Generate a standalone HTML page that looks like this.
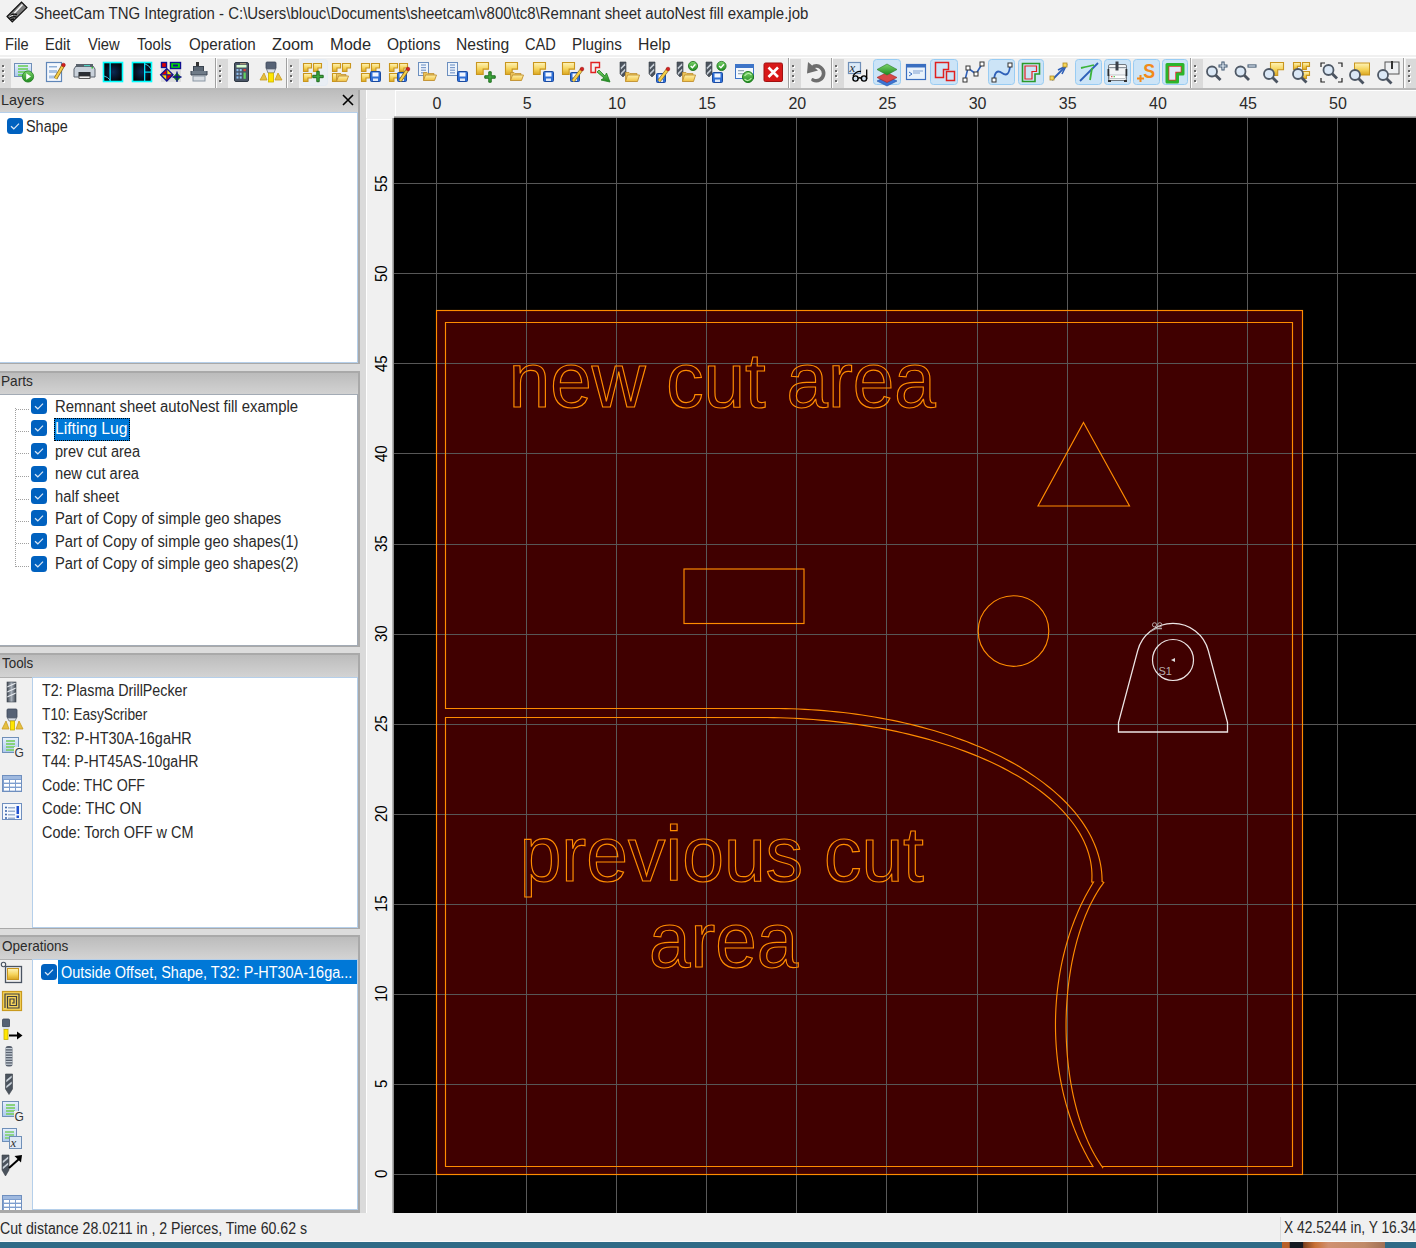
<!DOCTYPE html><html><head><meta charset="utf-8"><style>
html,body{margin:0;padding:0;width:1416px;height:1248px;overflow:hidden;background:#f0f0f0;}
*{box-sizing:border-box;}
.a{position:absolute;}
.t{position:absolute;white-space:pre;font-family:"Liberation Sans",sans-serif;line-height:1;transform-origin:0 0;}
svg{position:absolute;overflow:visible}
</style></head><body>
<div class="a" style="left:0;top:0;width:1416px;height:32px;background:#f2f2f2"></div>
<div class="a" style="left:0;top:32px;width:1416px;height:23px;background:#fff"></div>
<div class="a" style="left:0;top:55px;width:1416px;height:2px;background:#f0f0f0"></div>
<div class="a" style="left:0;top:57px;width:1416px;height:1px;background:#fff"></div>
<div class="a" style="left:0;top:58px;width:1416px;height:30px;background:#f0f0f0"></div>
<svg style="left:0;top:0" width="1416" height="90" viewBox="0 0 1416 90"><defs>
<linearGradient id="gy" x1="0" y1="0" x2="0" y2="1"><stop offset="0" stop-color="#fff4b8"/><stop offset="0.55" stop-color="#f5d35a"/><stop offset="1" stop-color="#d9a520"/></linearGradient>
<linearGradient id="gf" x1="0" y1="0" x2="0" y2="1"><stop offset="0" stop-color="#fff1a8"/><stop offset="1" stop-color="#f0c040"/></linearGradient>
<linearGradient id="gg" x1="0" y1="0" x2="0" y2="1"><stop offset="0" stop-color="#7ad36a"/><stop offset="1" stop-color="#1f8a1f"/></linearGradient>
<linearGradient id="gd" x1="0" y1="0" x2="1" y2="0"><stop offset="0" stop-color="#3f4650"/><stop offset="0.5" stop-color="#a8b0ba"/><stop offset="1" stop-color="#3f4650"/></linearGradient>
<linearGradient id="gm" x1="0" y1="0" x2="0" y2="1"><stop offset="0" stop-color="#e8f0ff"/><stop offset="1" stop-color="#aac8ec"/></linearGradient>
<radialGradient id="gb" cx="0.5" cy="0.5" r="0.6"><stop offset="0" stop-color="#0b2a55"/><stop offset="1" stop-color="#000"/></radialGradient>
</defs><rect x="0" y="59" width="11" height="29" fill="#dadada"/><rect x="3" y="66" width="2" height="2" fill="#fff"/><rect x="2" y="65" width="2" height="2" fill="#6a6a6a"/><rect x="3" y="71" width="2" height="2" fill="#fff"/><rect x="2" y="70" width="2" height="2" fill="#6a6a6a"/><rect x="3" y="76" width="2" height="2" fill="#fff"/><rect x="2" y="75" width="2" height="2" fill="#6a6a6a"/><rect x="3" y="81" width="2" height="2" fill="#fff"/><rect x="2" y="80" width="2" height="2" fill="#6a6a6a"/><rect x="14.5" y="63.5" width="17" height="13" fill="url(#gm)" stroke="#6f8fb8" stroke-width="1"/><path d="M18 66 H28" fill="none" stroke="#6ccf5a" stroke-width="1.6"/><path d="M18 69 H28" fill="none" stroke="#6ccf5a" stroke-width="1.6"/><path d="M18 72 H28" fill="none" stroke="#6ccf5a" stroke-width="1.6"/><path d="M18 75 H28" fill="none" stroke="#6ccf5a" stroke-width="1.6"/><circle cx="28" cy="76.5" r="5.6" fill="url(#gg)" stroke="#1f7f1f" stroke-width="0.8"/><path d="M26.2 73.3 L31 76.5 L26.2 79.7 Z" fill="#fff"/><rect x="46.5" y="62.5" width="15" height="19" fill="#f4f8fd" stroke="#5f86b8" stroke-width="1.2"/><rect x="49" y="66" width="8" height="1.5" fill="#8fb0d8"/><rect x="49" y="70" width="8" height="3" fill="#a9c3e3"/><rect x="49" y="75.5" width="9" height="3" fill="#a9c3e3"/><path d="M55.5 78.5 L63.5 65" fill="none" stroke="#8a6a20" stroke-width="3.6"/><path d="M55.5 78.5 L63.5 65" fill="none" stroke="#f5cf4a" stroke-width="2.2"/><circle cx="63.5" cy="65" r="1.8" fill="#d42020" stroke="#a01010" stroke-width="0.6"/><path d="M76 66 H93 L95 69 V77 H74 V69 Z" fill="#c9d1da" stroke="#5a636d" stroke-width="1"/><rect x="76" y="64" width="17" height="3" fill="#59626c"/><rect x="84" y="65" width="6" height="1.2" fill="#4fd0c0"/><rect x="91.5" y="67" width="1.5" height="1.5" fill="#30d030"/><rect x="78.5" y="72" width="12" height="4" fill="#2a2e33"/><rect x="79" y="76" width="11" height="2.5" fill="#f0f0f0" stroke="#333" stroke-width="0.8"/><rect x="103.5" y="62.5" width="19" height="19" fill="url(#gb)" stroke="#00ffff" stroke-width="1.6"/><rect x="109.5" y="63" width="1.3" height="18" fill="#00e8ff"/><path d="M104 76 Q108 77 110 80" fill="none" stroke="#40c8e8" stroke-width="1"/><rect x="132.5" y="62.5" width="19" height="19" fill="url(#gb)" stroke="#00ffff" stroke-width="1.6"/><rect x="144" y="63" width="1.3" height="18" fill="#00e8ff"/><rect x="145" y="71.5" width="6" height="1.2" fill="#00e8ff"/><path d="M145 64 Q149 65 151 69" fill="none" stroke="#40c8e8" stroke-width="1"/><rect x="161" y="69" width="20" height="13" fill="#dcdcdc"/><rect x="161.5" y="62.5" width="5" height="5" fill="#e00000" stroke="#101090" stroke-width="1.4"/><rect x="170.5" y="62.5" width="10" height="6" fill="#00e000" stroke="#101090" stroke-width="1.4"/><rect x="173" y="64.5" width="5" height="2" fill="#101090"/><path d="M166.8 68.6 L166.8 74.8 L160.60000000000002 74.8 Z" fill="#e00000"/><path d="M166.8 68.6 L173.0 74.8 L166.8 74.8 Z" fill="#ffe000"/><path d="M160.60000000000002 74.8 L166.8 74.8 L166.8 81.0 Z" fill="#ffe000"/><path d="M166.8 74.8 L173.0 74.8 L166.8 81.0 Z" fill="#e00000"/><path d="M166.8 68.6 L173.0 74.8 L166.8 81.0 L160.60000000000002 74.8 Z" fill="none" stroke="#101090" stroke-width="1.3"/><path d="M166.8 68.6 V81.0 M160.60000000000002 74.8 H173.0" fill="none" stroke="#101090" stroke-width="1"/><path d="M177 72.5 L181 77 L177 81.5 L173 77 Z" fill="#108010"/><path d="M177 71.5 V82 M172.5 77 H181.5" fill="none" stroke="#101090" stroke-width="1.3"/><rect x="196" y="62" width="3" height="4" fill="#333"/><rect x="193.5" y="66.5" width="10" height="8" fill="#5a6673" stroke="#3a4450" stroke-width="1"/><path d="M191 71 V75 H207 V71" fill="#6f7b88" stroke="#3a4450" stroke-width="1"/><rect x="193" y="76" width="12" height="5" fill="#d8dde3" stroke="#8a96a3" stroke-width="1"/><rect x="215" y="58" width="1" height="30" fill="#a0a0a0"/><rect x="216" y="58" width="1" height="30" fill="#fdfdfd"/><rect x="217" y="59" width="11" height="29" fill="#dadada"/><rect x="220" y="66" width="2" height="2" fill="#fff"/><rect x="219" y="65" width="2" height="2" fill="#6a6a6a"/><rect x="220" y="71" width="2" height="2" fill="#fff"/><rect x="219" y="70" width="2" height="2" fill="#6a6a6a"/><rect x="220" y="76" width="2" height="2" fill="#fff"/><rect x="219" y="75" width="2" height="2" fill="#6a6a6a"/><rect x="220" y="81" width="2" height="2" fill="#fff"/><rect x="219" y="80" width="2" height="2" fill="#6a6a6a"/><rect x="234.5" y="62.5" width="14" height="19" fill="#4a5566" stroke="#2f3844" stroke-width="1" rx="1.5"/><rect x="236.5" y="65" width="10" height="2.5" fill="#d8ffd0"/><rect x="240" y="63.3" width="6" height="1" fill="#c8a880"/><rect x="236.5" y="69.0" width="2" height="2.2" fill="#8fc0f0"/><rect x="239.7" y="69.0" width="2" height="2.2" fill="#8fc0f0"/><rect x="236.5" y="72.7" width="2" height="2.2" fill="#8fc0f0"/><rect x="239.7" y="72.7" width="2" height="2.2" fill="#8fc0f0"/><rect x="236.5" y="76.4" width="2" height="2.2" fill="#8fc0f0"/><rect x="239.7" y="76.4" width="2" height="2.2" fill="#8fc0f0"/><rect x="243.5" y="69" width="2.3" height="2.2" fill="#e04030"/><rect x="243.5" y="72.6" width="2.3" height="6.2" fill="#60d060"/><rect x="266" y="62" width="10" height="7" fill="#566275" stroke="#3e4858" stroke-width="0.8" rx="1"/><path d="M266.5 69 H275.5 L274 73 H268 Z" fill="#d9dee6" stroke="#6a7482" stroke-width="0.8"/><rect x="268.5" y="73" width="5" height="9" fill="#ffe600" stroke="#c8b000" stroke-width="0.8"/><path d="M260 80 L264 73 L267 80 Z" fill="#e6c040" stroke="#c89a20" stroke-width="0.8"/><path d="M275 80 L278 73 L282 80 Z" fill="#e6c040" stroke="#c89a20" stroke-width="0.8"/><rect x="286" y="58" width="1" height="30" fill="#a0a0a0"/><rect x="287" y="58" width="1" height="30" fill="#fdfdfd"/><rect x="288" y="59" width="11" height="29" fill="#dadada"/><rect x="291" y="66" width="2" height="2" fill="#fff"/><rect x="290" y="65" width="2" height="2" fill="#6a6a6a"/><rect x="291" y="71" width="2" height="2" fill="#fff"/><rect x="290" y="70" width="2" height="2" fill="#6a6a6a"/><rect x="291" y="76" width="2" height="2" fill="#fff"/><rect x="290" y="75" width="2" height="2" fill="#6a6a6a"/><rect x="291" y="81" width="2" height="2" fill="#fff"/><rect x="290" y="80" width="2" height="2" fill="#6a6a6a"/><rect x="300.5" y="59.5" width="27" height="26" fill="#e9eef4" stroke="#e4ebf3" stroke-width="1" rx="3"/><path d="M303.5 63.5 H311.5 V67.95 H307.95 V71.5 H303.5 Z" fill="url(#gy)" stroke="#c9961e" stroke-width="1.1"/><path d="M313.5 63.5 H321.5 V67.95 H317.95 V71.5 H313.5 Z" fill="url(#gy)" stroke="#c9961e" stroke-width="1.1"/><path d="M303.5 73.5 H311.5 V77.95 H307.95 V81.5 H303.5 Z" fill="url(#gy)" stroke="#c9961e" stroke-width="1.1"/><path d="M316.8 71.3 H319.2 V75.3 H323.2 V77.7 H319.2 V81.7 H316.8 V77.7 H312.8 V75.3 H316.8 Z" fill="#3ea83e" stroke="#1d6b1d" stroke-width="1"/><path d="M332.5 63.5 H340.5 V67.95 H336.95 V71.5 H332.5 Z" fill="url(#gy)" stroke="#c9961e" stroke-width="1.1"/><path d="M342.5 63.5 H350.5 V67.95 H346.95 V71.5 H342.5 Z" fill="url(#gy)" stroke="#c9961e" stroke-width="1.1"/><path d="M332.5 73.5 H340.5 V77.95 H336.95 V81.5 H332.5 Z" fill="url(#gy)" stroke="#c9961e" stroke-width="1.1"/><path d="M336.5 81.5 V73.5 H340 L341 74.5 H346 V76" fill="#e9c25a" stroke="#c09030" stroke-width="0.8"/><path d="M336.5 81.5 L338.5 76 H348.5 L346.5 81.5 Z" fill="url(#gf)" stroke="#c09030" stroke-width="0.9"/><path d="M361.5 63.5 H369.5 V67.95 H365.95 V71.5 H361.5 Z" fill="url(#gy)" stroke="#c9961e" stroke-width="1.1"/><path d="M371.5 63.5 H379.5 V67.95 H375.95 V71.5 H371.5 Z" fill="url(#gy)" stroke="#c9961e" stroke-width="1.1"/><path d="M361.5 73.5 H369.5 V77.95 H365.95 V81.5 H361.5 Z" fill="url(#gy)" stroke="#c9961e" stroke-width="1.1"/><rect x="370.5" y="71.5" width="10" height="10" fill="#2f6fd6" stroke="#1a4aa0" stroke-width="1" rx="1"/><rect x="372.5" y="72.5" width="6" height="4" fill="#f2f6ff"/><rect x="373" y="78.5" width="5" height="2.5" fill="#dfe8f8"/><path d="M389.5 63.5 H397.5 V67.95 H393.95 V71.5 H389.5 Z" fill="url(#gy)" stroke="#c9961e" stroke-width="1.1"/><path d="M399.5 63.5 H407.5 V67.95 H403.95 V71.5 H399.5 Z" fill="url(#gy)" stroke="#c9961e" stroke-width="1.1"/><path d="M389.5 73.5 H397.5 V77.95 H393.95 V81.5 H389.5 Z" fill="url(#gy)" stroke="#c9961e" stroke-width="1.1"/><rect x="397.5" y="72.5" width="9" height="9" fill="#2f6fd6" stroke="#1a4aa0" stroke-width="1" rx="1"/><rect x="399.5" y="73.5" width="5" height="4" fill="#f2f6ff"/><rect x="400" y="78.5" width="4" height="2.5" fill="#dfe8f8"/><path d="M400 81 L408 69" fill="none" stroke="#8a6a20" stroke-width="3.6"/><path d="M400 81 L408 69" fill="none" stroke="#f5cf4a" stroke-width="2.2"/><circle cx="408" cy="69" r="1.8" fill="#d42020" stroke="#a01010" stroke-width="0.6"/><rect x="418.5" y="62.5" width="10" height="13" fill="#eef4fb" stroke="#6c8fbf" stroke-width="1"/><path d="M421 65.0 H426" fill="none" stroke="#7a9acb" stroke-width="1.2"/><path d="M421 67.6 H426" fill="none" stroke="#7a9acb" stroke-width="1.2"/><path d="M421 70.2 H426" fill="none" stroke="#7a9acb" stroke-width="1.2"/><path d="M421 72.8 H426" fill="none" stroke="#7a9acb" stroke-width="1.2"/><path d="M423.5 80.5 V72.5 H427 L428 73.5 H434 V75" fill="#e9c25a" stroke="#c09030" stroke-width="0.8"/><path d="M423.5 80.5 L425.5 75 H436.5 L434.5 80.5 Z" fill="url(#gf)" stroke="#c09030" stroke-width="0.9"/><rect x="447.5" y="62.5" width="10" height="13" fill="#eef4fb" stroke="#6c8fbf" stroke-width="1"/><path d="M450 65.0 H455" fill="none" stroke="#7a9acb" stroke-width="1.2"/><path d="M450 67.6 H455" fill="none" stroke="#7a9acb" stroke-width="1.2"/><path d="M450 70.2 H455" fill="none" stroke="#7a9acb" stroke-width="1.2"/><path d="M450 72.8 H455" fill="none" stroke="#7a9acb" stroke-width="1.2"/><rect x="457.5" y="71.5" width="10" height="10" fill="#2f6fd6" stroke="#1a4aa0" stroke-width="1" rx="1"/><rect x="459.5" y="72.5" width="6" height="4" fill="#f2f6ff"/><rect x="460" y="78.5" width="5" height="2.5" fill="#dfe8f8"/><path d="M476.5 62.5 H488.5 V69.15 H483.15 V74.5 H476.5 Z" fill="url(#gy)" stroke="#c9961e" stroke-width="1.1"/><path d="M488.8 71.8 H491.2 V75.8 H495.2 V78.2 H491.2 V82.2 H488.8 V78.2 H484.8 V75.8 H488.8 Z" fill="#3ea83e" stroke="#1d6b1d" stroke-width="1"/><path d="M505.5 62.5 H517.5 V69.15 H512.15 V74.5 H505.5 Z" fill="url(#gy)" stroke="#c9961e" stroke-width="1.1"/><path d="M510.5 80.5 V72.5 H514 L515 73.5 H521 V75" fill="#e9c25a" stroke="#c09030" stroke-width="0.8"/><path d="M510.5 80.5 L512.5 75 H523.5 L521.5 80.5 Z" fill="url(#gf)" stroke="#c09030" stroke-width="0.9"/><path d="M533.5 62.5 H545.5 V69.15 H540.15 V74.5 H533.5 Z" fill="url(#gy)" stroke="#c9961e" stroke-width="1.1"/><rect x="543.5" y="71.5" width="10" height="10" fill="#2f6fd6" stroke="#1a4aa0" stroke-width="1" rx="1"/><rect x="545.5" y="72.5" width="6" height="4" fill="#f2f6ff"/><rect x="546" y="78.5" width="5" height="2.5" fill="#dfe8f8"/><path d="M562.5 62.5 H574.5 V69.15 H569.15 V74.5 H562.5 Z" fill="url(#gy)" stroke="#c9961e" stroke-width="1.1"/><rect x="570.5" y="72.5" width="9" height="9" fill="#2f6fd6" stroke="#1a4aa0" stroke-width="1" rx="1"/><rect x="572.5" y="73.5" width="5" height="4" fill="#f2f6ff"/><rect x="573" y="78.5" width="4" height="2.5" fill="#dfe8f8"/><path d="M573 81 L582 69" fill="none" stroke="#8a6a20" stroke-width="3.6"/><path d="M573 81 L582 69" fill="none" stroke="#f5cf4a" stroke-width="2.2"/><circle cx="582" cy="69" r="1.8" fill="#d42020" stroke="#a01010" stroke-width="0.6"/><path d="M591 62.5 H599.5 V67.5 H595.5 V72.5 H591 Z" fill="none" stroke="#e02020" stroke-width="1.4"/><path d="M599 70 L605 76 L606.5 73 L610 82 L601 80 L604 78 L597 72 Z" fill="url(#gg)" stroke="#1f7f1f" stroke-width="0.8"/><path d="M620 62 H626 V74 L623.0 77 L620 74 Z" fill="#4b535d" stroke="#3a4048" stroke-width="0.6"/><path d="M620.8 67.5 L625.2 63.0 V65.2 L620.8 69.7 Z" fill="#c9d0d8"/><path d="M620.8 73.0 L625.2 68.5 V70.7 L620.8 75.2 Z" fill="#c9d0d8"/><path d="M625.5 81.5 V72.5 H629 L630 73.5 H637 V75" fill="#e9c25a" stroke="#c09030" stroke-width="0.8"/><path d="M625.5 81.5 L627.5 75 H639.5 L637.5 81.5 Z" fill="url(#gf)" stroke="#c09030" stroke-width="0.9"/><path d="M649 62 H655 V74 L652.0 77 L649 74 Z" fill="#4b535d" stroke="#3a4048" stroke-width="0.6"/><path d="M649.8 67.5 L654.2 63.0 V65.2 L649.8 69.7 Z" fill="#c9d0d8"/><path d="M649.8 73.0 L654.2 68.5 V70.7 L649.8 75.2 Z" fill="#c9d0d8"/><rect x="656.5" y="73.5" width="9" height="9" fill="#2f6fd6" stroke="#1a4aa0" stroke-width="1" rx="1"/><rect x="658.5" y="74.5" width="5" height="4" fill="#f2f6ff"/><rect x="659" y="79.5" width="4" height="2.5" fill="#dfe8f8"/><path d="M659 81 L668 69" fill="none" stroke="#8a6a20" stroke-width="3.6"/><path d="M659 81 L668 69" fill="none" stroke="#f5cf4a" stroke-width="2.2"/><circle cx="668" cy="69" r="1.8" fill="#d42020" stroke="#a01010" stroke-width="0.6"/><path d="M677 62 H683 V74 L680.0 77 L677 74 Z" fill="#4b535d" stroke="#3a4048" stroke-width="0.6"/><path d="M677.8 67.5 L682.2 63.0 V65.2 L677.8 69.7 Z" fill="#c9d0d8"/><path d="M677.8 73.0 L682.2 68.5 V70.7 L677.8 75.2 Z" fill="#c9d0d8"/><path d="M682.5 81.5 V72.5 H686 L687 73.5 H693 V75" fill="#e9c25a" stroke="#c09030" stroke-width="0.8"/><path d="M682.5 81.5 L684.5 75 H695.5 L693.5 81.5 Z" fill="url(#gf)" stroke="#c09030" stroke-width="0.9"/><circle cx="693" cy="66" r="4.6" fill="url(#gg)" stroke="#187018" stroke-width="0.8"/><path d="M690.7 66 L692.4 67.8 L695.4 64.2" fill="none" stroke="#fff" stroke-width="1.4"/><path d="M706 62 H712 V74 L709.0 77 L706 74 Z" fill="#4b535d" stroke="#3a4048" stroke-width="0.6"/><path d="M706.8 67.5 L711.2 63.0 V65.2 L706.8 69.7 Z" fill="#c9d0d8"/><path d="M706.8 73.0 L711.2 68.5 V70.7 L706.8 75.2 Z" fill="#c9d0d8"/><rect x="712.5" y="72.5" width="10" height="10" fill="#2f6fd6" stroke="#1a4aa0" stroke-width="1" rx="1"/><rect x="714.5" y="73.5" width="6" height="4" fill="#f2f6ff"/><rect x="715" y="79.5" width="5" height="2.5" fill="#dfe8f8"/><circle cx="721.5" cy="66" r="4.6" fill="url(#gg)" stroke="#187018" stroke-width="0.8"/><path d="M719.2 66 L720.9 67.8 L723.9 64.2" fill="none" stroke="#fff" stroke-width="1.4"/><rect x="735.5" y="64.5" width="18" height="14" fill="#f4f8fd" stroke="#3d74c8" stroke-width="1"/><rect x="736" y="65" width="17" height="3" fill="#3d74c8"/><rect x="738" y="70" width="6" height="1.3" fill="#9ab"/><rect x="738" y="73" width="6" height="1.3" fill="#9ab"/><circle cx="748" cy="77" r="5.5" fill="url(#gg)" stroke="#1a7a1a" stroke-width="1"/><path d="M744.5 76 Q748 71.5 751.5 75 M751.5 78 Q748 82.5 744.5 79" fill="none" stroke="#b8f0a8" stroke-width="1.2"/><rect x="764" y="63" width="18.5" height="18.5" fill="#d81818" stroke="#a01010" stroke-width="1" rx="1.5"/><path d="M768.5 67.5 L778 77 M778 67.5 L768.5 77" fill="none" stroke="#fff" stroke-width="2.6"/><rect x="788" y="58" width="1" height="30" fill="#a0a0a0"/><rect x="789" y="58" width="1" height="30" fill="#fdfdfd"/><rect x="790" y="59" width="11" height="29" fill="#dadada"/><rect x="793" y="66" width="2" height="2" fill="#fff"/><rect x="792" y="65" width="2" height="2" fill="#6a6a6a"/><rect x="793" y="71" width="2" height="2" fill="#fff"/><rect x="792" y="70" width="2" height="2" fill="#6a6a6a"/><rect x="793" y="76" width="2" height="2" fill="#fff"/><rect x="792" y="75" width="2" height="2" fill="#6a6a6a"/><rect x="793" y="81" width="2" height="2" fill="#fff"/><rect x="792" y="80" width="2" height="2" fill="#6a6a6a"/><path d="M814 66.3 A7.4 7.4 0 1 1 813 80" fill="none" stroke="#6e6e6e" stroke-width="3.6" stroke-linecap="round"/><path d="M808 62 L807 73.5 L818 70.5 Z" fill="#6e6e6e"/><rect x="831" y="58" width="1" height="30" fill="#a0a0a0"/><rect x="832" y="58" width="1" height="30" fill="#fdfdfd"/><rect x="833" y="59" width="11" height="29" fill="#dadada"/><rect x="836" y="66" width="2" height="2" fill="#fff"/><rect x="835" y="65" width="2" height="2" fill="#6a6a6a"/><rect x="836" y="71" width="2" height="2" fill="#fff"/><rect x="835" y="70" width="2" height="2" fill="#6a6a6a"/><rect x="836" y="76" width="2" height="2" fill="#fff"/><rect x="835" y="75" width="2" height="2" fill="#6a6a6a"/><rect x="836" y="81" width="2" height="2" fill="#fff"/><rect x="835" y="80" width="2" height="2" fill="#6a6a6a"/><rect x="848.5" y="62.5" width="12" height="11" fill="#dceaf8" stroke="#6f8fb8" stroke-width="1.2"/><text x="849.5" y="72" font-family="Liberation Serif" font-style="italic" font-size="13" fill="#2a3340">x</text><circle cx="855.5" cy="78.5" r="2.6" fill="#cfe0f0" stroke="#000" stroke-width="1.4"/><circle cx="864" cy="78.5" r="2.6" fill="#cfe0f0" stroke="#000" stroke-width="1.4"/><path d="M858 78.5 Q859.7 77 861.5 78.5 M866.7 79 V69.5 M853 76 Q856 71 861 71.5" fill="none" stroke="#000" stroke-width="1.3"/><rect x="873.5" y="59.5" width="27" height="25" fill="#cce4f7" stroke="#99ccf3" stroke-width="1" rx="3"/><path d="M887 76 L897 81 L887 86 L877 81 Z" fill="#3b74d6" stroke="#2050a0" stroke-width="0.6"/><path d="M887 72.5 L897 77.5 L887 82.5 L877 77.5 Z" fill="#d84848" stroke="#a02020" stroke-width="0.6"/><path d="M887 64 L897 69.5 L887 75 L877 69.5 Z" fill="url(#gg)" stroke="#2a7a2a" stroke-width="0.6"/><rect x="906.5" y="64.5" width="19" height="15" fill="#eaf2fb" stroke="#3a6ec0" stroke-width="1.2"/><rect x="907" y="65" width="18" height="2.5" fill="#3a6ec0"/><path d="M909 72 L912 74 L909 76" fill="none" stroke="#3a6ec0" stroke-width="1"/><path d="M913 71 H923 M913 73 H920" fill="none" stroke="#7f9fd0" stroke-width="1"/><rect x="930.5" y="59.5" width="27" height="25" fill="#cce4f7" stroke="#99ccf3" stroke-width="1" rx="3"/><path d="M935.5 62.5 H948.5 V69.5 H943.5 V77.5 H935.5 Z" fill="none" stroke="#e02020" stroke-width="1.5"/><rect x="946.5" y="71.5" width="8" height="9" fill="none" stroke="#e02020" stroke-width="1.5"/><path d="M965 80 L968 68 L976 74 L982 64" fill="none" stroke="#2f60b8" stroke-width="1.6"/><rect x="963" y="78" width="4" height="4" fill="#fff" stroke="#333" stroke-width="1"/><rect x="966" y="66" width="4" height="4" fill="#fff" stroke="#333" stroke-width="1"/><rect x="974" y="72" width="4" height="4" fill="#fff" stroke="#333" stroke-width="1"/><rect x="980" y="62" width="4" height="4" fill="#fff" stroke="#333" stroke-width="1"/><rect x="988.5" y="59.5" width="26" height="25" fill="#cce4f7" stroke="#99ccf3" stroke-width="1" rx="3"/><path d="M994 80 Q995 68 1002 73 Q1009 78 1010 66" fill="none" stroke="#2f60b8" stroke-width="1.8"/><rect x="992" y="78" width="4" height="4" fill="#fff" stroke="#333" stroke-width="1"/><rect x="1008" y="63" width="4" height="4" fill="#fff" stroke="#333" stroke-width="1"/><rect x="1018.5" y="59.5" width="25" height="25" fill="#cce4f7" stroke="#99ccf3" stroke-width="1" rx="3"/><path d="M1022.5 63.5 H1039.5 V74 H1035 V81.5 H1022.5 Z" fill="none" stroke="#2a9a2a" stroke-width="1.6"/><path d="M1025 66 H1036.5 V71.5 H1032 V79 H1025 Z" fill="none" stroke="#e02020" stroke-width="1.2"/><path d="M1052 80 L1064 68" fill="none" stroke="#2f60b8" stroke-width="1.8"/><path d="M1058 70 L1066 66 L1062 74" fill="none" stroke="#2f60b8" stroke-width="1.6"/><rect x="1050" y="76" width="4" height="4" fill="#f5d55a" stroke="#b08a20" stroke-width="0.8"/><rect x="1063" y="63" width="4" height="4" fill="#f5d55a" stroke="#b08a20" stroke-width="0.8"/><rect x="1075.5" y="59.5" width="26" height="25" fill="#cce4f7" stroke="#99ccf3" stroke-width="1" rx="3"/><path d="M1080 81 L1098 63" fill="none" stroke="#2f60b8" stroke-width="1.8"/><path d="M1081 68 Q1090 66 1094 65 M1090 80 L1092 68" fill="none" stroke="#3cb43c" stroke-width="1.8"/><rect x="1104.5" y="59.5" width="26" height="25" fill="#cce4f7" stroke="#99ccf3" stroke-width="1" rx="3"/><rect x="1108.5" y="64.5" width="18" height="16" fill="#f2f4f6" stroke="#707880" stroke-width="1" rx="1.5"/><rect x="1109" y="67" width="17" height="1.2" fill="#8a929a"/><rect x="1115.5" y="61.5" width="3" height="9" fill="#3a4048"/><rect x="1109.5" y="75" width="16" height="3.5" fill="#fff" stroke="#9aa0a6" stroke-width="0.6"/><rect x="1111" y="76.2" width="1.5" height="1" fill="#e03030"/><rect x="1113.5" y="76.2" width="1.5" height="1" fill="#30c030"/><rect x="1107.5" y="69" width="1.8" height="7" fill="#2a2e33"/><rect x="1125.5" y="69" width="1.8" height="7" fill="#2a2e33"/><rect x="1108" y="80" width="3" height="2" fill="#333"/><rect x="1124" y="80" width="3" height="2" fill="#333"/><rect x="1133.5" y="59.5" width="26" height="25" fill="#cce4f7" stroke="#99ccf3" stroke-width="1" rx="3"/><text x="1143.2" y="78.5" font-family="Liberation Sans" font-weight="bold" font-size="21" fill="#f28a1a" transform="translate(1143.2 78.5) scale(0.85 1) translate(-1143.2 -78.5)">S</text><path d="M1137 78.5 H1144 M1140.5 75 V82" fill="none" stroke="#f28a1a" stroke-width="2"/><rect x="1162.5" y="59.5" width="25" height="25" fill="#cce4f7" stroke="#99ccf3" stroke-width="1" rx="3"/><path d="M1167 64.5 H1183 V74 H1177.5 V82 H1167 Z" fill="#e03030" stroke="#2bb52b" stroke-width="3" stroke-linejoin="round"/><path d="M1169.3 66.8 H1180.7 V71.8 H1175.3 V79.7 H1169.3 Z" fill="#dfeaf6"/><rect x="1190" y="58" width="1" height="30" fill="#a0a0a0"/><rect x="1191" y="58" width="1" height="30" fill="#fdfdfd"/><rect x="1192" y="59" width="11" height="29" fill="#dadada"/><rect x="1195" y="66" width="2" height="2" fill="#fff"/><rect x="1194" y="65" width="2" height="2" fill="#6a6a6a"/><rect x="1195" y="71" width="2" height="2" fill="#fff"/><rect x="1194" y="70" width="2" height="2" fill="#6a6a6a"/><rect x="1195" y="76" width="2" height="2" fill="#fff"/><rect x="1194" y="75" width="2" height="2" fill="#6a6a6a"/><rect x="1195" y="81" width="2" height="2" fill="#fff"/><rect x="1194" y="80" width="2" height="2" fill="#6a6a6a"/><path d="M1215.5 75.0 L1220.5 80.0" fill="none" stroke="#4a5360" stroke-width="2.8"/><circle cx="1212" cy="71.5" r="5" fill="#dbe8f6" stroke="#4f5966" stroke-width="1.8"/><path d="M1218.5 66 H1227.5 M1223 61.5 V70.5" fill="none" stroke="#3f5670" stroke-width="3.2"/><path d="M1219.5 66 H1226.5 M1223 62.5 V69.5" fill="none" stroke="#e8f0f8" stroke-width="1.2"/><path d="M1244.0 75.0 L1249.0 80.0" fill="none" stroke="#4a5360" stroke-width="2.8"/><circle cx="1240.5" cy="71.5" r="5" fill="#dbe8f6" stroke="#4f5966" stroke-width="1.8"/><path d="M1247.5 66 H1256.5" fill="none" stroke="#3f5670" stroke-width="3.2"/><path d="M1248.5 66 H1255.5" fill="none" stroke="#e8f0f8" stroke-width="1.2"/><path d="M1270.5 62.5 H1283.5 V69.7 H1277.7 V75.5 H1270.5 Z" fill="url(#gy)" stroke="#c9961e" stroke-width="1.1"/><path d="M1272.5 77.5 L1277.5 82.5" fill="none" stroke="#4a5360" stroke-width="2.8"/><circle cx="1269" cy="74" r="5" fill="#dbe8f6" stroke="#4f5966" stroke-width="1.8"/><path d="M1293.5 62.5 H1300.5 V66.4 H1297.4 V69.5 H1293.5 Z" fill="url(#gy)" stroke="#c9961e" stroke-width="1.1"/><path d="M1302.5 62.5 H1309.5 V66.4 H1306.4 V69.5 H1302.5 Z" fill="url(#gy)" stroke="#c9961e" stroke-width="1.1"/><path d="M1302.5 71.5 H1309.5 V75.4 H1306.4 V78.5 H1302.5 Z" fill="url(#gy)" stroke="#c9961e" stroke-width="1.1"/><path d="M1301.5 77.5 L1306.5 82.5" fill="none" stroke="#4a5360" stroke-width="2.8"/><circle cx="1298" cy="74" r="5" fill="#dbe8f6" stroke="#4f5966" stroke-width="1.8"/><path d="M1321 67 V63 H1325 M1338 63 H1342 V67 M1321 78 V82 H1325 M1342 78 V82 H1338" fill="none" stroke="#222" stroke-width="1.2"/><path d="M1332.0 73.5 L1337.0 78.5" fill="none" stroke="#4a5360" stroke-width="2.8"/><circle cx="1328.5" cy="70" r="5" fill="#dbe8f6" stroke="#4f5966" stroke-width="1.8"/><rect x="1354.5" y="63" width="15" height="12" fill="url(#gy)" stroke="#c9961e" stroke-width="1"/><path d="M1358.5 78.5 L1363.5 83.5" fill="none" stroke="#4a5360" stroke-width="2.8"/><circle cx="1355" cy="75" r="5" fill="#dbe8f6" stroke="#4f5966" stroke-width="1.8"/><rect x="1385" y="62" width="14" height="12" fill="#eef0f2" stroke="#555" stroke-width="1"/><rect x="1391" y="61" width="2" height="8" fill="#333"/><path d="M1386.5 78.5 L1391.5 83.5" fill="none" stroke="#4a5360" stroke-width="2.8"/><circle cx="1383" cy="75" r="5" fill="#dbe8f6" stroke="#4f5966" stroke-width="1.8"/><rect x="1403" y="58" width="1" height="30" fill="#a0a0a0"/><rect x="1404" y="58" width="1" height="30" fill="#fdfdfd"/><rect x="1406" y="59" width="11" height="29" fill="#dadada"/><rect x="1409" y="66" width="2" height="2" fill="#fff"/><rect x="1408" y="65" width="2" height="2" fill="#6a6a6a"/><rect x="1409" y="71" width="2" height="2" fill="#fff"/><rect x="1408" y="70" width="2" height="2" fill="#6a6a6a"/><rect x="1409" y="76" width="2" height="2" fill="#fff"/><rect x="1408" y="75" width="2" height="2" fill="#6a6a6a"/><rect x="1409" y="81" width="2" height="2" fill="#fff"/><rect x="1408" y="80" width="2" height="2" fill="#6a6a6a"/></svg>
<svg style="left:0;top:0" width="32" height="32" viewBox="0 0 32 32"><path d="M7 16.5 L21.5 2 L27 7.5 L12.3 22 Z" fill="#7c7c7c" stroke="#111" stroke-width="1.1"/><path d="M14 13.5 L22.5 4.5" stroke="#f4f4f4" stroke-width="1.6"/><path d="M10.5 15.5 Q13 13.5 17 14.5 M9 18.5 Q12 16 16.5 17 M11 19.5 L14 19" stroke="#111" stroke-width="1.3" fill="none"/><path d="M9.5 17 Q11 15.5 13 15.5" stroke="#eee" stroke-width="1" fill="none"/></svg>
<div class="t" style="left:33.92px;top:5.66px;font-size:16px;color:#2a2a2a;transform:scaleX(0.9345);">SheetCam TNG Integration - C:\Users\blouc\Documents\sheetcam\v800\tc8\Remnant sheet autoNest fill example.job</div>
<div class="t" style="left:5.30px;top:36.86px;font-size:16px;color:#2a2a2a;transform:scaleX(0.9134);">File</div>
<div class="t" style="left:45.39px;top:36.86px;font-size:16px;color:#2a2a2a;transform:scaleX(0.9181);">Edit</div>
<div class="t" style="left:87.94px;top:36.86px;font-size:16px;color:#2a2a2a;transform:scaleX(0.9236);">View</div>
<div class="t" style="left:136.67px;top:36.86px;font-size:16px;color:#2a2a2a;transform:scaleX(0.9165);">Tools</div>
<div class="t" style="left:189.28px;top:36.86px;font-size:16px;color:#2a2a2a;transform:scaleX(0.9493);">Operation</div>
<div class="t" style="left:272.48px;top:36.86px;font-size:16px;color:#2a2a2a;transform:scaleX(1.0169);">Zoom</div>
<div class="t" style="left:329.65px;top:36.86px;font-size:16px;color:#2a2a2a;transform:scaleX(1.0263);">Mode</div>
<div class="t" style="left:386.56px;top:36.86px;font-size:16px;color:#2a2a2a;transform:scaleX(0.9702);">Options</div>
<div class="t" style="left:455.72px;top:36.86px;font-size:16px;color:#2a2a2a;transform:scaleX(0.9787);">Nesting</div>
<div class="t" style="left:525.06px;top:36.86px;font-size:16px;color:#2a2a2a;transform:scaleX(0.9130);">CAD</div>
<div class="t" style="left:572.25px;top:36.86px;font-size:16px;color:#2a2a2a;transform:scaleX(0.9509);">Plugins</div>
<div class="t" style="left:638.31px;top:36.86px;font-size:16px;color:#2a2a2a;transform:scaleX(0.9864);">Help</div>
<div class="a" style="left:0;top:88px;width:366px;height:1125px;background:#dcdcdc"></div>
<div class="a" style="left:0;top:88px;width:360px;height:2px;background:#a9a9a9"></div>
<div class="a" style="left:0;top:90px;width:360px;height:22px;background:linear-gradient(#bcbcbc,#d3d3d3)"></div>
<div class="a" style="left:0;top:112px;width:360px;height:1px;background:#b0b0b0"></div>
<div class="t" style="left:1.32px;top:91.90px;font-size:15px;color:#2a2a2a;transform:scaleX(0.9595);">Layers</div>
<div class="a" style="left:-1px;top:112px;width:359px;height:251px;background:#fff;border:1px solid #b5cfea;border-left-color:#b5cfea"></div>
<div class="a" style="left:358px;top:88px;width:2px;height:276px;background:#a9a9a9"></div>
<div class="a" style="left:0;top:363px;width:360px;height:1px;background:#a9a9a9"></div>
<div class="a" style="left:0;top:371px;width:360px;height:2px;background:#a9a9a9"></div>
<div class="a" style="left:0;top:373px;width:360px;height:22px;background:linear-gradient(#bcbcbc,#d3d3d3)"></div>
<div class="a" style="left:0;top:395px;width:360px;height:1px;background:#b0b0b0"></div>
<div class="t" style="left:1.38px;top:373.30px;font-size:15px;color:#2a2a2a;transform:scaleX(0.9116);">Parts</div>
<div class="a" style="left:-1px;top:394px;width:359px;height:252px;background:#fff;border:1px solid #a3abb5"></div>
<div class="a" style="left:358px;top:371px;width:2px;height:276px;background:#a9a9a9"></div>
<div class="a" style="left:0;top:646px;width:360px;height:1px;background:#a9a9a9"></div>
<div class="a" style="left:0;top:653px;width:360px;height:2px;background:#a9a9a9"></div>
<div class="a" style="left:0;top:655px;width:360px;height:22px;background:linear-gradient(#bcbcbc,#d3d3d3)"></div>
<div class="a" style="left:0;top:677px;width:360px;height:1px;background:#b0b0b0"></div>
<div class="t" style="left:2.20px;top:655.30px;font-size:15px;color:#2a2a2a;transform:scaleX(0.8938);">Tools</div>
<div class="a" style="left:0;top:678px;width:33px;height:250px;background:#f0f0f0"></div>
<div class="a" style="left:32px;top:677px;width:326px;height:251px;background:#fff;border:1px solid #b5cfea;border-left-color:#b5cfea"></div>
<div class="a" style="left:358px;top:653px;width:2px;height:276px;background:#a9a9a9"></div>
<div class="a" style="left:0;top:928px;width:360px;height:1px;background:#a9a9a9"></div>
<div class="a" style="left:0;top:935px;width:360px;height:2px;background:#a9a9a9"></div>
<div class="a" style="left:0;top:937px;width:360px;height:22px;background:linear-gradient(#bcbcbc,#d3d3d3)"></div>
<div class="a" style="left:0;top:959px;width:360px;height:1px;background:#b0b0b0"></div>
<div class="t" style="left:1.86px;top:938.20px;font-size:15px;color:#2a2a2a;transform:scaleX(0.9040);">Operations</div>
<div class="a" style="left:0;top:960px;width:33px;height:250px;background:#f0f0f0"></div>
<div class="a" style="left:32px;top:959px;width:326px;height:251px;background:#fff;border:1px solid #b5cfea;border-left-color:#b5cfea"></div>
<div class="a" style="left:358px;top:935px;width:2px;height:276px;background:#a9a9a9"></div>
<div class="a" style="left:0;top:1210px;width:360px;height:3px;background:#a9a9a9"></div>
<svg style="left:342px;top:94px" width="12" height="12" viewBox="0 0 12 12"><path d="M1 1L11 11M11 1L1 11" stroke="#000" stroke-width="1.6"/></svg>
<svg style="left:7px;top:118px" width="16" height="16" viewBox="0 0 16 16"><rect x="0" y="0" width="16" height="16" rx="3.5" fill="#0061bf"/><path d="M4 8.3 L6.8 10.8 L12 5.6" fill="none" stroke="#dbe8f6" stroke-width="1.2"/></svg>
<div class="t" style="left:26.15px;top:119.46px;font-size:16px;color:#2a2a2a;transform:scaleX(0.9012);">Shape</div>
<svg style="left:0;top:395px" width="40" height="180"><line x1="15.5" y1="13" x2="15.5" y2="173" stroke="#a0a0a0" stroke-dasharray="1 1"/><line x1="16" y1="14.5" x2="29" y2="14.5" stroke="#a0a0a0" stroke-dasharray="1 1"/><line x1="16" y1="36.5" x2="29" y2="36.5" stroke="#a0a0a0" stroke-dasharray="1 1"/><line x1="16" y1="58.5" x2="29" y2="58.5" stroke="#a0a0a0" stroke-dasharray="1 1"/><line x1="16" y1="81.5" x2="29" y2="81.5" stroke="#a0a0a0" stroke-dasharray="1 1"/><line x1="16" y1="104.5" x2="29" y2="104.5" stroke="#a0a0a0" stroke-dasharray="1 1"/><line x1="16" y1="126.5" x2="29" y2="126.5" stroke="#a0a0a0" stroke-dasharray="1 1"/><line x1="16" y1="148.5" x2="29" y2="148.5" stroke="#a0a0a0" stroke-dasharray="1 1"/><line x1="16" y1="171.5" x2="29" y2="171.5" stroke="#a0a0a0" stroke-dasharray="1 1"/></svg>
<svg style="left:31px;top:398px" width="16" height="16" viewBox="0 0 16 16"><rect x="0" y="0" width="16" height="16" rx="3.5" fill="#0061bf"/><path d="M4 8.3 L6.8 10.8 L12 5.6" fill="none" stroke="#dbe8f6" stroke-width="1.2"/></svg>
<div class="t" style="left:54.78px;top:398.56px;font-size:16px;color:#2a2a2a;transform:scaleX(0.9293);">Remnant sheet autoNest fill example</div>
<svg style="left:31px;top:420px" width="16" height="16" viewBox="0 0 16 16"><rect x="0" y="0" width="16" height="16" rx="3.5" fill="#0061bf"/><path d="M4 8.3 L6.8 10.8 L12 5.6" fill="none" stroke="#dbe8f6" stroke-width="1.2"/></svg>
<div class="a" style="left:54px;top:418px;width:76px;height:23px;background:#0078d7;outline:1px dotted #000;outline-offset:-1px"></div>
<div class="t" style="left:55.11px;top:421.06px;font-size:16px;color:#fff;transform:scaleX(0.9833);">Lifting Lug</div>
<svg style="left:31px;top:443px" width="16" height="16" viewBox="0 0 16 16"><rect x="0" y="0" width="16" height="16" rx="3.5" fill="#0061bf"/><path d="M4 8.3 L6.8 10.8 L12 5.6" fill="none" stroke="#dbe8f6" stroke-width="1.2"/></svg>
<div class="t" style="left:55.06px;top:443.56px;font-size:16px;color:#2a2a2a;transform:scaleX(0.9107);">prev cut area</div>
<svg style="left:31px;top:466px" width="16" height="16" viewBox="0 0 16 16"><rect x="0" y="0" width="16" height="16" rx="3.5" fill="#0061bf"/><path d="M4 8.3 L6.8 10.8 L12 5.6" fill="none" stroke="#dbe8f6" stroke-width="1.2"/></svg>
<div class="t" style="left:55.03px;top:466.06px;font-size:16px;color:#2a2a2a;transform:scaleX(0.9167);">new cut area</div>
<svg style="left:31px;top:488px" width="16" height="16" viewBox="0 0 16 16"><rect x="0" y="0" width="16" height="16" rx="3.5" fill="#0061bf"/><path d="M4 8.3 L6.8 10.8 L12 5.6" fill="none" stroke="#dbe8f6" stroke-width="1.2"/></svg>
<div class="t" style="left:54.98px;top:488.56px;font-size:16px;color:#2a2a2a;transform:scaleX(0.9229);">half sheet</div>
<svg style="left:31px;top:510px" width="16" height="16" viewBox="0 0 16 16"><rect x="0" y="0" width="16" height="16" rx="3.5" fill="#0061bf"/><path d="M4 8.3 L6.8 10.8 L12 5.6" fill="none" stroke="#dbe8f6" stroke-width="1.2"/></svg>
<div class="t" style="left:54.79px;top:511.06px;font-size:16px;color:#2a2a2a;transform:scaleX(0.9251);">Part of Copy of simple geo shapes</div>
<svg style="left:31px;top:533px" width="16" height="16" viewBox="0 0 16 16"><rect x="0" y="0" width="16" height="16" rx="3.5" fill="#0061bf"/><path d="M4 8.3 L6.8 10.8 L12 5.6" fill="none" stroke="#dbe8f6" stroke-width="1.2"/></svg>
<div class="t" style="left:54.79px;top:533.56px;font-size:16px;color:#2a2a2a;transform:scaleX(0.9220);">Part of Copy of simple geo shapes(1)</div>
<svg style="left:31px;top:556px" width="16" height="16" viewBox="0 0 16 16"><rect x="0" y="0" width="16" height="16" rx="3.5" fill="#0061bf"/><path d="M4 8.3 L6.8 10.8 L12 5.6" fill="none" stroke="#dbe8f6" stroke-width="1.2"/></svg>
<div class="t" style="left:54.79px;top:556.06px;font-size:16px;color:#2a2a2a;transform:scaleX(0.9220);">Part of Copy of simple geo shapes(2)</div>
<div class="t" style="left:42.08px;top:683.46px;font-size:16px;color:#2a2a2a;transform:scaleX(0.8928);">T2: Plasma DrillPecker</div>
<div class="t" style="left:42.09px;top:707.04px;font-size:16px;color:#2a2a2a;transform:scaleX(0.8576);">T10: EasyScriber</div>
<div class="t" style="left:42.08px;top:730.62px;font-size:16px;color:#2a2a2a;transform:scaleX(0.9002);">T32: P-HT30A-16gaHR</div>
<div class="t" style="left:42.08px;top:754.20px;font-size:16px;color:#2a2a2a;transform:scaleX(0.8848);">T44: P-HT45AS-10gaHR</div>
<div class="t" style="left:41.68px;top:777.78px;font-size:16px;color:#2a2a2a;transform:scaleX(0.8869);">Code: THC OFF</div>
<div class="t" style="left:41.65px;top:801.36px;font-size:16px;color:#2a2a2a;transform:scaleX(0.9215);">Code: THC ON</div>
<div class="t" style="left:41.67px;top:824.94px;font-size:16px;color:#2a2a2a;transform:scaleX(0.9029);">Code: Torch OFF w CM</div>
<div class="a" style="left:58px;top:960px;width:299px;height:24px;background:#0078d7"></div>
<svg style="left:41px;top:964px" width="16" height="16" viewBox="0 0 16 16"><rect x="0" y="0" width="16" height="16" rx="3.5" fill="#0061bf"/><path d="M4 8.3 L6.8 10.8 L12 5.6" fill="none" stroke="#dbe8f6" stroke-width="1.2"/></svg>
<div class="t" style="left:60.52px;top:964.76px;font-size:16px;color:#fff;transform:scaleX(0.9039);">Outside Offset, Shape, T32: P-HT30A-16ga...</div>
<svg style="left:0;top:0" width="33" height="1213" viewBox="0 0 33 1213"><clipPath id="sic"><rect x="0" y="677" width="33" height="533"/></clipPath><g clip-path="url(#sic)"><rect x="7" y="682" width="9" height="20" fill="url(#gd)"/><path d="M7 687 L16 683 M7 692 L16 688 M7 697 L16 693" fill="none" stroke="#e8ecf0" stroke-width="1.2"/><rect x="7" y="682" width="9" height="20" fill="none" stroke="#3f4650" stroke-width="0.6"/><rect x="7" y="709" width="10" height="9" fill="#566275" stroke="#3e4858" stroke-width="0.8" rx="1"/><path d="M7.5 718 H16.5 L15 721 H9 Z" fill="#d9dee6" stroke="#6a7482" stroke-width="0.8"/><rect x="10.5" y="721" width="4" height="9" fill="#ffe600" stroke="#c8b000" stroke-width="0.8"/><path d="M2 729 L6 721 L9 729 Z" fill="#e6c040" stroke="#c89a20" stroke-width="0.8"/><path d="M16 729 L19 721 L23 729 Z" fill="#e6c040" stroke="#c89a20" stroke-width="0.8"/><rect x="2.5" y="737.5" width="16" height="15" fill="url(#gm)" stroke="#6f8fb8" stroke-width="1"/><path d="M6 741 H15" fill="none" stroke="#7fd06f" stroke-width="1.8"/><path d="M6 744 H15" fill="none" stroke="#7fd06f" stroke-width="1.8"/><path d="M6 747 H15" fill="none" stroke="#7fd06f" stroke-width="1.8"/><path d="M6 750 H15" fill="none" stroke="#7fd06f" stroke-width="1.8"/><rect x="14" y="747" width="9" height="11" fill="#f0f0f0"/><text x="14.5" y="757" font-family="Liberation Sans" font-size="12" fill="#333">G</text><rect x="2.5" y="775.5" width="19" height="16" fill="#7f9fcf" stroke="#6f8fbf" stroke-width="1"/><rect x="4" y="780" width="5" height="2.6" fill="#fff"/><rect x="10" y="780" width="5" height="2.6" fill="#fff"/><rect x="16" y="780" width="5" height="2.6" fill="#fff"/><rect x="4" y="784" width="5" height="2.6" fill="#fff"/><rect x="10" y="784" width="5" height="2.6" fill="#fff"/><rect x="16" y="784" width="5" height="2.6" fill="#fff"/><rect x="4" y="788" width="5" height="2.6" fill="#fff"/><rect x="10" y="788" width="5" height="2.6" fill="#fff"/><rect x="16" y="788" width="5" height="2.6" fill="#fff"/><rect x="3" y="776" width="18" height="3" fill="#9fb9df"/><rect x="2.5" y="803.5" width="19" height="16" fill="#f4f8fd" stroke="#6f8fbf" stroke-width="1"/><circle cx="6" cy="807.5" r="0.9" fill="#1f4fa0"/><rect x="8" y="807.0" width="7" height="1.5" fill="#9ab0d0"/><circle cx="6" cy="811.0" r="0.9" fill="#1f4fa0"/><rect x="8" y="810.5" width="7" height="1.5" fill="#9ab0d0"/><circle cx="6" cy="814.5" r="0.9" fill="#1f4fa0"/><rect x="8" y="814.0" width="7" height="1.5" fill="#9ab0d0"/><circle cx="6" cy="818.0" r="0.9" fill="#1f4fa0"/><rect x="8" y="817.5" width="7" height="1.5" fill="#9ab0d0"/><rect x="16.5" y="806" width="2.5" height="8" fill="#1f50d0"/><rect x="16.5" y="815.5" width="2.5" height="2.5" fill="#1f50d0"/><rect x="5.5" y="966.5" width="16" height="16" fill="none" stroke="#4a5462" stroke-width="1.3"/><rect x="7.5" y="968.5" width="11" height="11" fill="url(#gy)" stroke="#c9961e" stroke-width="1"/><circle cx="3.5" cy="964.5" r="2.2" fill="#f4f4f4" stroke="#4a5462" stroke-width="1.1"/><rect x="2.5" y="991.5" width="19" height="19" fill="#f5d35a" stroke="#c99a1e" stroke-width="1.2"/><path d="M5 1008 V994 H19 V1008 H7.5 V996.5 H16.5 V1005.5 H10 V999 H14 V1003 H12" fill="none" stroke="#404040" stroke-width="1.2"/><rect x="2.5" y="1019" width="7" height="8" fill="#566275" stroke="#3e4858" stroke-width="0.8" rx="1"/><rect x="3" y="1027" width="6" height="2.5" fill="#d9dee6"/><rect x="4" y="1029.5" width="4" height="10" fill="#ffe600" stroke="#c8b000" stroke-width="0.8"/><path d="M9 1035.5 H19" fill="none" stroke="#000" stroke-width="2"/><path d="M17 1031.5 L22.5 1035.5 L17 1039.5 Z" fill="#000"/><rect x="5.5" y="1046" width="7" height="20.5" fill="#5a6270" rx="2.5"/><rect x="5.5" y="1048.0" width="7" height="1.2" fill="#c8d0d8"/><rect x="5.5" y="1050.6" width="7" height="1.2" fill="#c8d0d8"/><rect x="5.5" y="1053.2" width="7" height="1.2" fill="#c8d0d8"/><rect x="5.5" y="1055.8" width="7" height="1.2" fill="#c8d0d8"/><rect x="5.5" y="1058.4" width="7" height="1.2" fill="#c8d0d8"/><rect x="5.5" y="1061.0" width="7" height="1.2" fill="#c8d0d8"/><rect x="5.5" y="1063.6" width="7" height="1.2" fill="#c8d0d8"/><path d="M5.5 1074 H12.5 V1089 L9 1094.5 L5.5 1089 Z" fill="#4b535d" stroke="#3a4048" stroke-width="0.6"/><path d="M6.3 1080 L11.7 1075.5 V1077.7 L6.3 1082.2 Z M6.3 1086 L11.7 1081.5 V1083.7 L6.3 1088.2 Z" fill="#c9d0d8"/><rect x="2.5" y="1101.5" width="16" height="15" fill="url(#gm)" stroke="#6f8fb8" stroke-width="1"/><path d="M6 1105 H15" fill="none" stroke="#7fd06f" stroke-width="1.8"/><path d="M6 1108 H15" fill="none" stroke="#7fd06f" stroke-width="1.8"/><path d="M6 1111 H15" fill="none" stroke="#7fd06f" stroke-width="1.8"/><path d="M6 1114 H15" fill="none" stroke="#7fd06f" stroke-width="1.8"/><rect x="14" y="1111" width="9" height="11" fill="#f0f0f0"/><text x="14.5" y="1121" font-family="Liberation Sans" font-size="12" fill="#333">G</text><rect x="2.5" y="1128.5" width="14" height="13" fill="url(#gm)" stroke="#6f8fb8" stroke-width="1"/><path d="M5 1132 H14" fill="none" stroke="#7fd06f" stroke-width="1.6"/><path d="M5 1135 H14" fill="none" stroke="#7fd06f" stroke-width="1.6"/><path d="M5 1138 H14" fill="none" stroke="#7fd06f" stroke-width="1.6"/><rect x="9.5" y="1136.5" width="12" height="12" fill="#dfe8f4" stroke="#6f8fb8" stroke-width="1"/><text x="10.5" y="1147" font-family="Liberation Serif" font-style="italic" font-size="13" fill="#333">x</text><path d="M2 1155 H9 V1170 L5.5 1176 L2 1170 Z" fill="#4b535d" stroke="#3a4048" stroke-width="0.6"/><path d="M2.8 1161 L8.2 1156.5 V1158.7 L2.8 1163.2 Z M2.8 1167 L8.2 1162.5 V1164.7 L2.8 1169.2 Z" fill="#c9d0d8"/><path d="M9 1168 L19 1159" fill="none" stroke="#000" stroke-width="2"/><path d="M14.5 1156 L22 1155 L21 1162.5 Z" fill="#000"/><rect x="2.5" y="1195.5" width="19" height="16" fill="#7f9fcf" stroke="#6f8fbf" stroke-width="1"/><rect x="3" y="1196" width="18" height="3" fill="#9fb9df"/><rect x="4" y="1200" width="5" height="2.6" fill="#fff"/><rect x="10" y="1200" width="5" height="2.6" fill="#fff"/><rect x="16" y="1200" width="5" height="2.6" fill="#fff"/><rect x="4" y="1204" width="5" height="2.6" fill="#fff"/><rect x="10" y="1204" width="5" height="2.6" fill="#fff"/><rect x="16" y="1204" width="5" height="2.6" fill="#fff"/><rect x="4" y="1208" width="5" height="2.6" fill="#fff"/><rect x="10" y="1208" width="5" height="2.6" fill="#fff"/><rect x="16" y="1208" width="5" height="2.6" fill="#fff"/></g></svg>
<div class="a" style="left:360px;top:88px;width:1056px;height:30px;background:#f0f0f0"></div>
<div class="a" style="left:0;top:88px;width:1416px;height:2px;background:#b9b9b9"></div>
<div class="a" style="left:360px;top:90px;width:6px;height:1123px;background:#dadada"></div>
<div class="a" style="left:366px;top:90px;width:1px;height:1123px;background:#fff"></div>
<div class="a" style="left:395px;top:90px;width:1021px;height:1px;background:#fff"></div>
<div class="a" style="left:395px;top:90px;width:1px;height:27px;background:#fff"></div>
<div class="a" style="left:366px;top:119px;width:27px;height:1px;background:#fff"></div>
<div class="a" style="left:366px;top:118px;width:28px;height:1095px;background:#f0f0f0"></div>
<div class="a" style="left:367px;top:119px;width:26px;height:1px;background:#fff"></div>
<div class="a" style="left:366px;top:119px;width:1px;height:1094px;background:#fff"></div>
<div class="a" style="left:392px;top:118px;width:2px;height:1095px;background:linear-gradient(90deg,#c8c8c8,#7a7a7a)"></div>
<div class="a" style="left:394px;top:116px;width:1022px;height:2px;background:linear-gradient(#c8c8c8,#7a7a7a)"></div>
<div class="t" style="left:432.55px;top:95.76px;font-size:16px;color:#2a2a2a;transform:scaleX(1.0000);">0</div>
<div class="t" style="left:522.67px;top:95.76px;font-size:16px;color:#2a2a2a;transform:scaleX(1.0000);">5</div>
<div class="t" style="left:608.00px;top:95.76px;font-size:16px;color:#2a2a2a;transform:scaleX(1.0000);">10</div>
<div class="t" style="left:698.13px;top:95.76px;font-size:16px;color:#2a2a2a;transform:scaleX(1.0000);">15</div>
<div class="t" style="left:788.41px;top:95.76px;font-size:16px;color:#2a2a2a;transform:scaleX(1.0000);">20</div>
<div class="t" style="left:878.54px;top:95.76px;font-size:16px;color:#2a2a2a;transform:scaleX(1.0000);">25</div>
<div class="t" style="left:968.71px;top:95.76px;font-size:16px;color:#2a2a2a;transform:scaleX(1.0000);">30</div>
<div class="t" style="left:1058.83px;top:95.76px;font-size:16px;color:#2a2a2a;transform:scaleX(1.0000);">35</div>
<div class="t" style="left:1149.03px;top:95.76px;font-size:16px;color:#2a2a2a;transform:scaleX(1.0000);">40</div>
<div class="t" style="left:1239.15px;top:95.76px;font-size:16px;color:#2a2a2a;transform:scaleX(1.0000);">45</div>
<div class="t" style="left:1329.09px;top:95.76px;font-size:16px;color:#2a2a2a;transform:scaleX(1.0000);">50</div>
<div class="t" style="left:374.46px;top:1177.68px;font-size:16px;transform:rotate(-90deg) scaleX(0.94);transform-origin:0 0;color:#000">0</div>
<div class="t" style="left:374.46px;top:1087.67px;font-size:16px;transform:rotate(-90deg) scaleX(0.94);transform-origin:0 0;color:#000">5</div>
<div class="t" style="left:374.46px;top:1002.14px;font-size:16px;transform:rotate(-90deg) scaleX(0.94);transform-origin:0 0;color:#000">10</div>
<div class="t" style="left:374.46px;top:912.12px;font-size:16px;transform:rotate(-90deg) scaleX(0.94);transform-origin:0 0;color:#000">15</div>
<div class="t" style="left:374.46px;top:821.95px;font-size:16px;transform:rotate(-90deg) scaleX(0.94);transform-origin:0 0;color:#000">20</div>
<div class="t" style="left:374.46px;top:731.93px;font-size:16px;transform:rotate(-90deg) scaleX(0.94);transform-origin:0 0;color:#000">25</div>
<div class="t" style="left:374.46px;top:641.86px;font-size:16px;transform:rotate(-90deg) scaleX(0.94);transform-origin:0 0;color:#000">30</div>
<div class="t" style="left:374.46px;top:551.84px;font-size:16px;transform:rotate(-90deg) scaleX(0.94);transform-origin:0 0;color:#000">35</div>
<div class="t" style="left:374.46px;top:461.74px;font-size:16px;transform:rotate(-90deg) scaleX(0.94);transform-origin:0 0;color:#000">40</div>
<div class="t" style="left:374.46px;top:371.72px;font-size:16px;transform:rotate(-90deg) scaleX(0.94);transform-origin:0 0;color:#000">45</div>
<div class="t" style="left:374.46px;top:281.87px;font-size:16px;transform:rotate(-90deg) scaleX(0.94);transform-origin:0 0;color:#000">50</div>
<div class="t" style="left:374.46px;top:191.85px;font-size:16px;transform:rotate(-90deg) scaleX(0.94);transform-origin:0 0;color:#000">55</div>
<div class="a" style="left:0;top:1213px;width:1416px;height:28px;background:#f0f0f0"></div>
<div class="t" style="left:-0.22px;top:1221.26px;font-size:16px;color:#2a2a2a;transform:scaleX(0.8836);">Cut distance 28.0211 in , 2 Pierces, Time 60.62 s</div>
<div class="a" style="left:1280px;top:1217px;width:1px;height:24px;background:#d9d9d9"></div>
<div class="a" style="left:0;top:1241px;width:1416px;height:1px;background:#fafafa"></div>
<div class="a" style="left:0;top:1242px;width:1416px;height:6px;background:#2f6a86"></div>
<div class="a" style="left:1282px;top:1242px;width:103px;height:6px;background:linear-gradient(90deg,#b8602a 0,#b8602a 7%,#141a22 8%,#141a22 20%,#7a4020 21%,#c87035 32%,#d09070 45%,#c08a68 80%,#a07055 100%)"></div>
<div class="t" style="left:1283.99px;top:1220.16px;font-size:16px;color:#2a2a2a;transform:scaleX(0.8604);">X 42.5244 in, Y 16.34</div>
<svg style="left:0;top:0" width="1416" height="1213" viewBox="0 0 1416 1213"><defs><clipPath id="cv"><rect x="394" y="118" width="1022" height="1095"/></clipPath></defs><g clip-path="url(#cv)"><rect x="394" y="118" width="1022" height="1095" fill="#000"/><rect x="436" y="310" width="867" height="865" fill="#400000"/><path d="M436.5 118V1213M526.5 118V1213M616.5 118V1213M706.5 118V1213M796.5 118V1213M886.5 118V1213M977.5 118V1213M1067.5 118V1213M1157.5 118V1213M1247.5 118V1213M1337.5 118V1213" stroke="#595959" stroke-width="1" fill="none" shape-rendering="crispEdges"/><path d="M394 1174.50H1416M394 1084.50H1416M394 994.50H1416M394 904.50H1416M394 814.50H1416M394 724.50H1416M394 634.50H1416M394 544.50H1416M394 453.50H1416M394 363.50H1416M394 273.50H1416M394 183.50H1416" stroke="#575757" stroke-width="1" fill="none" shape-rendering="crispEdges"/><path d="M445.5 708.5 H772.45 L772.45 708.50 L778.93 708.53 L785.41 708.63 L791.89 708.80 L798.36 709.03 L804.82 709.33 L811.26 709.70 L817.69 710.13 L824.11 710.63 L830.50 711.20 L836.87 711.83 L843.22 712.52 L849.53 713.28 L855.82 714.11 L862.08 715.00 L868.30 715.95 L874.48 716.97 L880.63 718.06 L886.73 719.20 L892.79 720.41 L898.80 721.68 L904.77 723.01 L910.68 724.40 L916.54 725.86 L922.34 727.37 L928.09 728.94 L933.77 730.57 L939.40 732.26 L944.95 734.01 L950.44 735.81 L955.87 737.67 L961.22 739.59 L966.50 741.56 L971.70 743.59 L976.83 745.66 L981.87 747.79 L986.84 749.97 L991.72 752.21 L996.52 754.49 L1001.23 756.82 L1005.86 759.20 L1010.39 761.63 L1014.83 764.10 L1019.18 766.62 L1023.43 769.18 L1027.58 771.78 L1031.64 774.43 L1035.59 777.12 L1039.45 779.85 L1043.20 782.62 L1046.84 785.42 L1050.38 788.26 L1053.82 791.14 L1057.14 794.06 L1060.35 797.00 L1063.45 799.98 L1066.44 803.00 L1069.32 806.04 L1072.08 809.11 L1074.72 812.21 L1077.25 815.33 L1079.66 818.48 L1081.95 821.66 L1084.12 824.85 L1086.17 828.07 L1088.10 831.31 L1089.91 834.57 L1091.59 837.85 L1093.15 841.14 L1094.59 844.45 L1095.90 847.77 L1097.09 851.11 L1098.15 854.46 L1099.08 857.81 L1099.89 861.18 L1100.58 864.56 L1101.13 867.94 L1101.56 871.32 L1101.86 874.71 L1102.03 878.10 L1102.08 881.50 L1103.80 882.49 L1102.10 884.80 L1100.43 887.19 L1098.79 889.67 L1097.18 892.23 L1095.61 894.88 L1094.06 897.61 L1092.55 900.42 L1091.07 903.30 L1089.62 906.27 L1088.21 909.30 L1086.84 912.41 L1085.51 915.59 L1084.21 918.84 L1082.95 922.16 L1081.74 925.54 L1080.56 928.99 L1079.43 932.49 L1078.33 936.05 L1077.28 939.67 L1076.28 943.34 L1075.32 947.07 L1074.40 950.84 L1073.53 954.66 L1072.70 958.52 L1071.92 962.43 L1071.19 966.38 L1070.51 970.36 L1069.87 974.38 L1069.28 978.42 L1068.74 982.50 L1068.25 986.61 L1067.80 990.74 L1067.41 994.89 L1067.07 999.06 L1066.78 1003.25 L1066.53 1007.45 L1066.34 1011.66 L1066.20 1015.89 L1066.10 1020.11 L1066.06 1024.35 L1066.07 1028.58 L1066.13 1032.81 L1066.24 1037.03 L1066.40 1041.25 L1066.61 1045.46 L1066.87 1049.66 L1067.18 1053.84 L1067.55 1058.01 L1067.96 1062.15 L1068.42 1066.27 L1068.93 1070.37 L1069.48 1074.44 L1070.09 1078.48 L1070.74 1082.48 L1071.45 1086.45 L1072.19 1090.38 L1072.99 1094.27 L1073.83 1098.12 L1074.72 1101.92 L1075.65 1105.68 L1076.63 1109.39 L1077.65 1113.04 L1078.72 1116.64 L1079.82 1120.18 L1080.97 1123.66 L1082.16 1127.09 L1083.39 1130.44 L1084.67 1133.74 L1085.98 1136.96 L1087.32 1140.12 L1088.71 1143.20 L1090.13 1146.22 L1091.59 1149.15 L1093.08 1152.01 L1094.60 1154.79 L1096.16 1157.49 L1097.75 1160.11 L1099.37 1162.64 L1101.02 1165.09 L1102.70 1167.45 L1103 1166.5 H1292.5 V322.5 H445.5 Z" fill="none" stroke="#ff8c00" stroke-width="1.15"/><path d="M445.5 717.5 H760.33 L760.33 717.50 L767.00 717.53 L773.66 717.63 L780.32 717.79 L786.97 718.01 L793.61 718.30 L800.24 718.65 L806.85 719.07 L813.44 719.55 L820.01 720.09 L826.56 720.69 L833.08 721.36 L839.57 722.09 L846.03 722.88 L852.45 723.74 L858.83 724.65 L865.18 725.63 L871.49 726.67 L877.74 727.77 L883.96 728.92 L890.12 730.14 L896.23 731.42 L902.28 732.75 L908.28 734.15 L914.21 735.60 L920.09 737.10 L925.90 738.67 L931.64 740.29 L937.32 741.96 L942.92 743.69 L948.45 745.47 L953.90 747.30 L959.28 749.19 L964.57 751.13 L969.78 753.11 L974.91 755.15 L979.95 757.24 L984.90 759.37 L989.76 761.55 L994.53 763.78 L999.20 766.05 L1003.78 768.37 L1008.26 770.73 L1012.63 773.14 L1016.91 775.58 L1021.08 778.07 L1025.15 780.59 L1029.11 783.16 L1032.96 785.76 L1036.70 788.39 L1040.33 791.07 L1043.85 793.78 L1047.25 796.52 L1050.54 799.29 L1053.70 802.09 L1056.75 804.93 L1059.68 807.79 L1062.49 810.68 L1065.18 813.60 L1067.74 816.54 L1070.18 819.50 L1072.50 822.49 L1074.68 825.50 L1076.74 828.53 L1078.68 831.58 L1080.48 834.65 L1082.16 837.74 L1083.70 840.84 L1085.12 843.95 L1086.40 847.08 L1087.55 850.22 L1088.57 853.37 L1089.45 856.52 L1090.21 859.69 L1090.83 862.86 L1091.31 866.04 L1091.67 869.22 L1091.88 872.41 L1091.97 875.60 L1091.92 878.78 L1091.74 881.97 L1093.56 882.08 L1091.77 884.99 L1090.02 887.93 L1088.30 890.93 L1086.62 893.97 L1084.99 897.06 L1083.39 900.19 L1081.83 903.36 L1080.31 906.57 L1078.83 909.82 L1077.39 913.12 L1076.00 916.45 L1074.65 919.81 L1073.34 923.22 L1072.07 926.66 L1070.85 930.13 L1069.67 933.63 L1068.54 937.16 L1067.45 940.73 L1066.41 944.32 L1065.41 947.94 L1064.46 951.59 L1063.55 955.26 L1062.69 958.95 L1061.88 962.67 L1061.12 966.41 L1060.40 970.17 L1059.73 973.94 L1059.11 977.74 L1058.54 981.55 L1058.02 985.37 L1057.54 989.21 L1057.12 993.06 L1056.74 996.92 L1056.41 1000.80 L1056.13 1004.67 L1055.90 1008.56 L1055.72 1012.45 L1055.59 1016.35 L1055.50 1020.25 L1055.47 1024.15 L1055.49 1028.05 L1055.55 1031.95 L1055.67 1035.84 L1055.83 1039.73 L1056.05 1043.62 L1056.31 1047.50 L1056.62 1051.38 L1056.99 1055.24 L1057.40 1059.10 L1057.85 1062.94 L1058.36 1066.77 L1058.92 1070.58 L1059.52 1074.38 L1060.18 1078.17 L1060.88 1081.93 L1061.63 1085.68 L1062.42 1089.40 L1063.26 1093.10 L1064.15 1096.78 L1065.09 1100.44 L1066.07 1104.07 L1067.10 1107.67 L1068.17 1111.24 L1069.29 1114.79 L1070.45 1118.30 L1071.66 1121.78 L1072.91 1125.23 L1074.21 1128.65 L1075.55 1132.02 L1076.93 1135.37 L1078.35 1138.67 L1079.81 1141.94 L1081.32 1145.17 L1082.87 1148.35 L1084.45 1151.49 L1086.08 1154.59 L1087.74 1157.65 L1089.45 1160.66 L1091.19 1163.63 L1092.97 1166.54 L1093 1166.5 H445.5 Z" fill="none" stroke="#ff8c00" stroke-width="1.15"/><rect x="436.5" y="310.5" width="866" height="864" fill="none" stroke="#ff8c00" stroke-width="1.15"/><path d="M1083.5 422.5 L1129.5 506 L1038 506 Z" fill="none" stroke="#ff8c00" stroke-width="1.15"/><rect x="684" y="569" width="120" height="54.5" fill="none" stroke="#ff8c00" stroke-width="1.15"/><circle cx="1013.5" cy="631" r="35.3" fill="none" stroke="#ff8c00" stroke-width="1.15"/><path d="M1118.5 732 V722.5 L1137.7 650.6 A36.5 36.5 0 0 1 1208.3 650.6 L1227.5 722.5 V732 Z" fill="none" stroke="#ece4e4" stroke-width="1.3"/><circle cx="1173" cy="660" r="20.5" fill="none" stroke="#ece4e4" stroke-width="1.2"/><path d="M1171 660 L1175 658 L1175 662 Z" fill="#ddd"/><text x="1158.5" y="674.5" font-family="Liberation Sans" font-size="11" fill="#b8acac">S1</text><g shape-rendering="geometricPrecision"><circle cx="1154.5" cy="624.8" r="2.1" fill="none" stroke="#bdb5b5" stroke-width="0.9"/><circle cx="1159.8" cy="624.8" r="2.1" fill="none" stroke="#bdb5b5" stroke-width="0.9"/><path d="M1150.5 631.5 L1156 628.5 H1162" fill="none" stroke="#a8a0a0" stroke-width="1.3"/></g><g transform="translate(508.75 407.10) scale(1 1.0400)"><text x="0" y="0" font-family="Liberation Sans" font-size="74.60" fill="none" stroke="#ff8c00" stroke-width="1.15">new cut area</text></g><g transform="translate(519.66 881.00) scale(1 1.0400)"><text x="0" y="0" font-family="Liberation Sans" font-size="75.00" fill="none" stroke="#ff8c00" stroke-width="1.15">previous cut</text></g><g transform="translate(649.03 967.20) scale(1 1.0400)"><text x="0" y="0" font-family="Liberation Sans" font-size="74.60" fill="none" stroke="#ff8c00" stroke-width="1.15">area</text></g></g></svg>
</body></html>
